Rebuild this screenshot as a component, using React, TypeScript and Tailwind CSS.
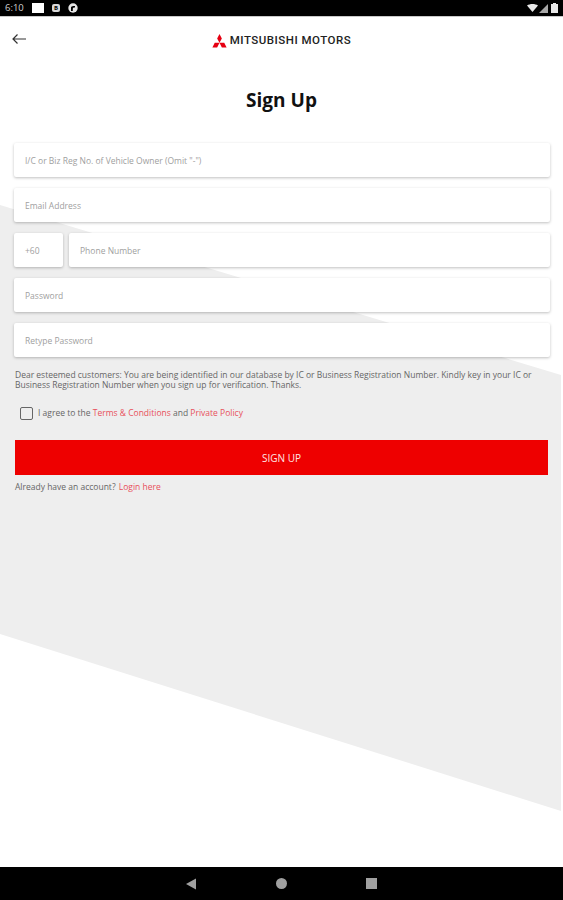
function Field({ label, className = "" }: { label: string; className?: string }) {
  return (
    <div className={`flex h-[34px] items-center rounded-[2px] bg-white pl-[11px] pt-[2px] text-[8.5px] text-[#a0a0a0] shadow-[0_1px_3px_rgba(0,0,0,0.25)] ${className}`}>
      {label}
    </div>
  );
}

export default function App() {
  return (
    <div className="flex h-[900px] w-[563px] flex-col overflow-hidden bg-white font-['Open_Sans',sans-serif]">
      <div className="flex h-[16px] shrink-0 items-center justify-between bg-black pl-[5px] pr-[5px] text-[9.5px] text-[#cfcfcf]">
        <div className="flex items-center">
          <span className="w-[27px]">6:10</span>
          <span className="h-[10px] w-[12px] bg-white" />
          <span className="ml-[8px] flex h-[8px] w-[8px] items-center justify-center rounded-[2px] bg-[#d8d8d8] text-[6px] font-bold leading-none text-black">B</span>
          <svg width="10" height="10" viewBox="0 0 10 10" className="ml-[8px]"><circle cx="5" cy="5" r="4.7" fill="#e6e6e6" /><path d="M3 8V4.5C3 3.5 4 3 7 3V4.6C5.5 4.6 4.8 5 4.8 6V8Z" fill="#000" /></svg>
        </div>
        <div className="flex items-center">
          <svg width="11" height="8" viewBox="0 0 11 8"><path d="M0 1.5 C3 -0.5 8 -0.5 11 1.5 L5.5 8Z" fill="#e8e8e8" /></svg>
          <svg width="9" height="9" viewBox="0 0 9 9" className="ml-[1px]"><path d="M0 9 L9 0 V9Z" fill="#a8a8a8" /></svg>
          <svg width="7" height="10" viewBox="0 0 7 10" className="ml-[3px]"><path d="M2 0H5V1H7V10H0V1H2Z" fill="#e8e8e8" /></svg>
        </div>
      </div>

      <div className="relative flex-1 border-t border-[#c9c9c9]">
        <svg className="absolute inset-0" width="563" height="850" viewBox="0 0 563 850">
          <path d="M0 188 L561 358 V794 L0 617 Z" fill="#eeeeee" />
        </svg>

        <div className="relative flex flex-col">
          <div className="relative flex h-[126px] flex-col items-center">
            <svg className="absolute left-[12px] top-[16px]" width="14" height="12" viewBox="0 0 14 12" fill="none" stroke="#333" strokeWidth="1.2">
              <path d="M5.5 1.5 L1 6 L5.5 10.5 M1 6 H14" />
            </svg>
            <div className="mt-[16px] flex h-[16px] items-center">
              <svg width="15" height="14" viewBox="0 0 30 24" preserveAspectRatio="none" className="mr-[3px]">
                <path d="M15 0 L19.7 7.5 L15 15 L10.3 7.5 Z M15 15 L5.5 15 L0.8 23 L10.3 23 Z M15 15 L24.5 15 L29.2 23 L19.7 23 Z" fill="#e60012" />
              </svg>
              <span className="font-['Roboto',sans-serif] text-[11.5px] font-medium leading-none tracking-[0.5px] text-[#222]">MITSUBISHI MOTORS</span>
            </div>
            <h1 className="mt-[39px] text-[19px] font-bold leading-[24px] text-[#111]">Sign Up</h1>
          </div>

          <div className="flex flex-col gap-[11px] pl-[14px] pr-[13px]">
            <Field label={'I/C or Biz Reg No. of Vehicle Owner (Omit "-")'} />
            <Field label="Email Address" />
            <div className="flex gap-[6px]">
              <Field label="+60" className="w-[49px]" />
              <Field label="Phone Number" className="flex-1" />
            </div>
            <Field label="Password" />
            <Field label="Retype Password" />
          </div>

          <p className="mt-[13px] pl-[15px] pr-[20px] text-[8.5px] leading-[10px] text-[#666]">
            Dear esteemed customers: You are being identified in our database by IC or Business Registration Number. Kindly key in your IC or Business Registration Number when you sign up for verification. Thanks.
          </p>

          <div className="mt-[14px] flex h-[18px] items-center pl-[20px] text-[8.5px] text-[#666]">
            <span className="mr-[5px] h-[13px] w-[13px] rounded-[2px] border-[1.5px] border-[#666]" />
            <span>I agree to the <span className="text-[#e8505b]">Terms &amp; Conditions</span> and <span className="text-[#e8505b]">Private Policy</span></span>
          </div>

          <div className="ml-[15px] mr-[15px] mt-[18px] flex h-[35px] items-center justify-center bg-[#ee0000] pt-[2px] text-[10px] text-[#ffe5e5]">SIGN UP</div>

          <p className="mt-[6px] pl-[15px] text-[8.5px] leading-[12px] text-[#666]">
            Already have an account? <span className="ml-[1px] text-[#e8505b]">Login here</span>
          </p>
        </div>
      </div>

      <div className="flex h-[33px] shrink-0 items-center justify-center bg-black pr-[2px]">
        <div className="flex items-center gap-[79px]">
          <svg width="12" height="12" viewBox="0 0 12 12"><path d="M11 0.5 V11.5 L1 6 Z" fill="#a0a0a0" /></svg>
          <span className="h-[11px] w-[11px] rounded-full bg-[#a0a0a0]" />
          <span className="h-[11px] w-[11px] bg-[#a0a0a0]" />
        </div>
      </div>
    </div>
  );
}
